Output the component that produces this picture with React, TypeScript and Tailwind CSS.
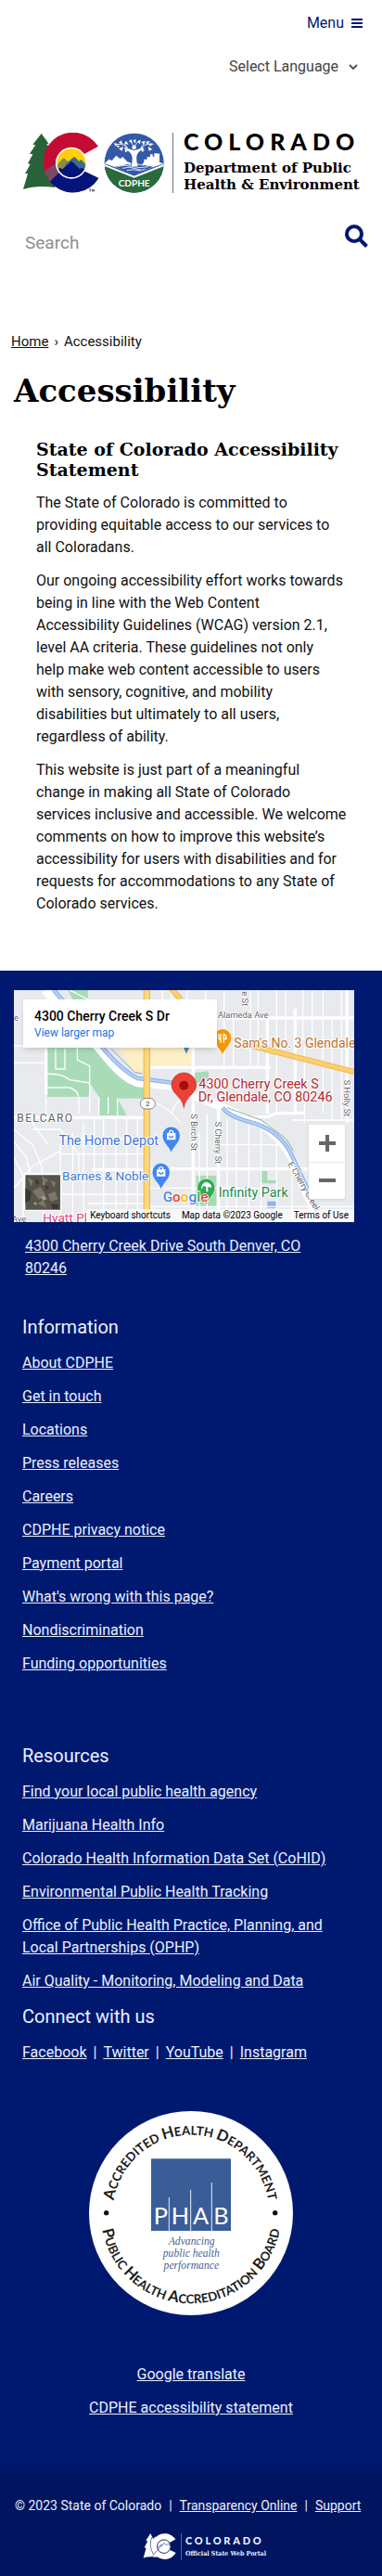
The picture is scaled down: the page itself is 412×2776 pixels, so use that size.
import type { ReactNode } from "react";

const informationLinks = [
  "About CDPHE",
  "Get in touch",
  "Locations",
  "Press releases",
  "Careers",
  "CDPHE privacy notice",
  "Payment portal",
  "What's wrong with this page?",
  "Nondiscrimination",
  "Funding opportunities",
];

const resourceLinks = [
  "Find your local public health agency",
  "Marijuana Health Info",
  "Colorado Health Information Data Set (CoHID)",
  "Environmental Public Health Tracking",
  "Office of Public Health Practice, Planning, and Local Partnerships (OPHP)",
  "Air Quality - Monitoring, Modeling and Data",
];

const socialLinks = ["Facebook", "Twitter", "YouTube", "Instagram"];

function BrandMarks() {
  return (
    <svg viewBox="72 430 462 195" className="h-[65px] w-[154px] shrink-0" aria-hidden="true">
      <defs>
        <clipPath id="c-shape">
          <path d="M318 474A97 97 0 1 0 319 577L268 552A47 47 0 1 1 266 503Z" />
        </clipPath>
        <clipPath id="sun">
          <circle cx="231" cy="528" r="46" />
        </clipPath>
        <clipPath id="seal">
          <circle cx="434" cy="528" r="96" />
        </clipPath>
      </defs>
      <path d="M134 433L106 468L115 470L96 498L106 500L90 530L98 532L81 563L90 562L75 613Q120 598 178 607L178 500L164 498L172 496L151 467L158 466Z" fill="#276239" />
      <g clipPath="url(#c-shape)">
        <path d="M120 420H340V640H120Z" fill="#c40c33" />
        <path d="M130 565L182 528L205 545L150 600Z" fill="#7a4a66" />
        <path d="M150 600L215 535L340 545V640H150Z" fill="#05147c" />
      </g>
      <circle cx="231" cy="528" r="51" fill="#fff" />
      <g clipPath="url(#sun)">
        <path d="M180 475H285V580H180Z" fill="#ffd100" />
        <path d="M175 545L206 510L222 526L242 508L256 522L262 517L290 545V590H175Z" fill="#8b8b45" />
        <path d="M214 528L240 508L256 523L263 517L290 548V590H190Z" fill="#3a6e8d" />
        <path d="M175 560L193 543L202 548L232 522L258 547L265 543L290 560V590H175Z" fill="#05147c" />
      </g>
      <path d="M288 613h7m-3.500 0v8m7 0v-8l3 5l3-5v8" fill="none" stroke="#222" strokeWidth="2" />

      <g clipPath="url(#seal)">
        <path d="M335 430H533V630H335Z" fill="#3359a8" />
        <path d="M335 536L434 575L533 536V630H335Z" fill="#2b6b3b" />
        <path d="M338 530L352 516L362 520L376 504L389 515L397 508L412 524L424 528L418 545L434 552L455 540L466 524V516H476V508H486V500H494V507H499V497H510V500L516 496V526L530 530L434 562Z" fill="#fff" />
        <path d="M335 534L434 573L533 534" fill="none" stroke="#fff" strokeWidth="6" />
        <path d="M372 540L434 564L496 540L452 533L434 541L414 532Z" fill="#3359a8" />
        <path d="M380 539Q405 532 428 539T480 540M396 545Q420 538 440 546T470 547M410 552Q430 546 456 553M425 533Q445 530 465 535" fill="none" stroke="#fff" strokeWidth="2.500" />
        <path d="M425 538Q431 515 426 503Q421 490 401 481L406 477Q423 485 434 487Q445 485 462 477L467 481Q447 490 443 503Q439 515 446 538Z" fill="#fff" />
        <circle cx="434" cy="477" r="7" fill="#fff" />
      </g>
      <g fill="#fff">
        <path d="M370 462l14 6l-12 5zM384 482l15-7l-4 14zM392 455l6 14l-14-7zM408 456l8 12l-14-2zM424 451l5 13l-12-6zM440 451l-2 14l-8-10zM455 453l-2 14l-9-9zM470 456l-4 13l-9-9zM485 456l-7 14l-7-10zM498 466l-15 8l2-10zM493 483l-14-8l3 14zM404 484l12 4l-11 6zM468 486l-12-3l5 10zM376 472l12 0l-6 7z" />
        <path d="M380 468Q400 464 412 480M490 468Q470 464 456 480M402 465L412 478M466 465L456 478M424 460L430 470M446 460L438 470" fill="none" stroke="#fff" strokeWidth="2.500" />
      </g>
      <text x="434" y="603" textAnchor="middle" fontSize="30" fontWeight="700" fill="#fff" className="font-['Lato']">
        CDPHE
      </text>
    </svg>
  );
}

function Poi({ x, y, fill, children }: { x: number; y: number; fill: string; children?: ReactNode }) {
  return (
    <g transform={`translate(${x} ${y})`}>
      <path d="M0 58C-5 36-29 25-29 0A29 29 0 0 1 29 0C29 25 5 36 0 58Z" fill={fill} stroke="#fff" strokeWidth="2" />
      {children}
    </g>
  );
}

function BagGlyph() {
  return (
    <g fill="none" stroke="#fff" strokeWidth="4">
      <path d="M-12-6H12V12H-12Z" fill="#fff" />
      <path d="M-6-6V-10A6 6 0 0 1 6-10V-6" />
      <path d="M-6 0A6 6 0 0 0 6 0" stroke="#4285f4" />
    </g>
  );
}

function MapDrawing() {
  return (
    <svg viewBox="0 0 1101 750" preserveAspectRatio="xMidYMid slice" className="block h-full w-full font-['Roboto']" role="img" aria-label="Map of 4300 Cherry Creek S Dr">
      <path d="M0 0H1101V750H0Z" fill="#e8eaed" />
      <path d="M175 0H240V30H190ZM104 180H270L330 250L430 320V350H335L365 405H275V345L245 300V345H104Z" fill="#aadbb8" />
      <path d="M330 180H580V240L390 265Z" fill="#fdf0c6" />
      <path d="M590 600H655V700H590ZM797 585H820V615H850V625H797ZM575 268L630 262V300H590Z" fill="#a8dab5" />
      <path d="M820 683H850V705H820Z" fill="#8ab4f8" />

      <g fill="none" stroke="#fff" strokeWidth="4">
        <path d="M104 180V410M135 190V255H165V190M205 180V225L245 245V400M104 270Q160 270 180 290L245 300M104 315H180Q210 325 210 350V400M275 345V405M305 345V400M335 350V405M0 180H104M0 235H100M180 0L240 30" />
        <path d="M150 500V740M190 460V740M225 430V740M260 415V600M290 415V740M330 415V740M365 415V740M400 415V740M150 480H420M150 530H420M150 660H420M240 690H420" />
        <path d="M0 450L60 500L90 570L95 740M0 490L40 540L60 620M0 540L30 600V750M60 450H150L210 530V600M0 640L60 570L150 520M60 430L110 500" />
        <path d="M480 0V30M510 0V30M560 0V30M620 0V30M680 0V260M710 90V250M765 0V250M790 0V250M850 0V400M880 0V170M935 0V160M965 0V180M1000 0V400M1030 90V420M1060 0V420" />
        <path d="M450 360Q500 380 540 430M510 400Q520 360 560 340M600 460V740M625 400V740M690 420V740M720 420V740M760 430V740M800 450V740M850 470V740M900 540V740" />
        <path d="M440 700H1101M440 640H800M660 500H860M900 420H1101M940 180V430" />
      </g>
      <g fill="none" stroke="#fff" strokeWidth="10">
        <path d="M0 412H420M440 250H830M820 90V400M690 90H1101M440 578H950M580 180V750M662 380V750M910 60V400M1078 0V430M104 190V340M770 410H820L850 398H940M250 580H420" />
      </g>
      <path d="M100 0L285 200Q350 285 400 300L510 310Q590 345 690 385L810 440Q900 505 935 630L990 750" fill="none" stroke="#fff" strokeWidth="26" />
      <path d="M130 0L290 190Q350 260 400 285L520 300M675 380Q700 410 760 425Q860 450 900 535T970 690" fill="none" stroke="#8fb5ee" strokeWidth="14" />
      <path d="M130 0L290 190Q350 260 400 285L520 300M675 380Q700 410 760 425Q860 450 900 535T970 690" fill="none" stroke="#b9d2f6" strokeWidth="6" />
      <path d="M315 190L390 265L415 270M690 380L800 420L880 480L905 520" fill="none" stroke="#86ad9e" strokeWidth="3" />
      <path d="M430 0V750" stroke="#f1b84c" strokeWidth="22" />
      <path d="M430 0V750" stroke="#fcd97e" strokeWidth="15" />
      <path d="M505-10L540 30M770 180L1101 264" stroke="#f1b84c" strokeWidth="18" />
      <path d="M505-10L540 30M770 180L1101 264" stroke="#fcd06c" strokeWidth="12" />
      <rect x="409" y="350" width="48" height="34" rx="17" fill="#fff" stroke="#555" strokeWidth="2" />
      <text x="433" y="376" fontSize="24" textAnchor="middle" fill="#444">2</text>

      <g fontSize="28" fill="#5f6368" stroke="#fff" strokeWidth="5" paintOrder="stroke" strokeLinejoin="round">
        <text x="660" y="89">Alameda Ave</text>
        <text x="0" y="98">e</text>
        <text x="-6" y="750">Ave</text>
        <text transform="translate(738 4) rotate(90)">e St</text>
        <text transform="translate(1067 290) rotate(90)">S Holly St</text>
        <text transform="translate(573 400) rotate(90)">S Birch St</text>
        <text transform="translate(651 425) rotate(90)">S Cherry St</text>
        <text transform="translate(886 562) rotate(60)">E Cherry Creek</text>
        <text x="10" y="425" fontSize="36" letterSpacing="4">BELCARO</text>
      </g>

      <path d="M549 186H567L558 206Z" fill="#5282c0" />
      <Poi x={675} y={154} fill="#f29900">
        <path d="M-12-12V0Q-12 6-6 6V16M-6-12V6M4 16V-12Q14-8 12 4H4" fill="none" stroke="#fff" strokeWidth="4" />
      </Poi>
      <Poi x={509} y={470} fill="#4285f4"><BagGlyph /></Poi>
      <Poi x={476} y={588} fill="#4285f4"><BagGlyph /></Poi>
      <Poi x={622} y={638} fill="#34a853">
        <path d="M-16 6Q-16-14 0-18Q18-14 18 0L6-2V14H0V-2L-8-6Z" fill="#fff" />
      </Poi>
      <path d="M550 380C546 345 510 335 510 307A40 40 0 0 1 590 307C590 335 554 345 550 380Z" fill="#ea4335" stroke="#c5221f" strokeWidth="2" />
      <circle cx="550" cy="308" r="15" fill="#a50e0e" />

      <g fontSize="41" stroke="#fff" strokeWidth="6" paintOrder="stroke" strokeLinejoin="round">
        <text x="712" y="185" fontSize="42" fill="#c2732c">Sam's No. 3 Glendale</text>
        <text x="598" y="317" fontSize="43" fill="#b3282d">4300 Cherry Creek S</text>
        <text x="596" y="359" fontSize="43" fill="#b3282d">Dr, Glendale, CO 80246</text>
        <text x="468" y="500" fontSize="43" textAnchor="end" fill="#3c78d8">The Home Depot</text>
        <text x="436" y="616" textAnchor="end" fill="#3c78d8">Barnes &amp; Noble</text>
        <text x="662" y="668" fontSize="43" fill="#25874a">Infinity Park</text>
        <text x="94" y="750" fill="#e0457b">Hyatt Pl</text>
      </g>
      <text x="482" y="684" fontSize="46" stroke="#fff" strokeWidth="5" paintOrder="stroke" fontWeight="500">
        <tspan fill="#4285f4">G</tspan>
        <tspan fill="#ea4335">o</tspan>
        <tspan fill="#fbbc04">o</tspan>
        <tspan fill="#4285f4">g</tspan>
        <tspan fill="#34a853">l</tspan>
        <tspan fill="#ea4335">e</tspan>
      </text>

      <path d="M32 592H154V714H32Z" fill="#fff" />
      <path d="M37 598H150V710H37Z" fill="#55534a" />
      <path d="M45 606l18 10l-8 20zM90 600l22 14l-18 16zM60 650l26-14l16 24l-20 18zM110 660l24-10l8 26l-22 8zM76 690l20-12l10 26zM116 616l20 4l-6 18z" fill="#7d7566" />
      <path d="M37 640l20 12l-6 30l-14 6zM100 632l12 4l-6 12zM120 690l24 4v14h-18zM70 610l12 10l-10 12z" fill="#37392f" />
      <path d="M92 622l8 4l-4 6zM86 668l14-4l6 12l-12 4zM62 690l8-6l6 12z" fill="#a39a89" />
    </svg>
  );
}

function LocationMap() {
  return (
    <div className="relative mr-[30px] ml-[15px] h-[250px] overflow-hidden font-['Roboto']">
      <MapDrawing />
      <div className="absolute top-[10px] left-[10px] h-[52px] w-[209px] bg-white px-3 pt-2 shadow-md">
        <p className="text-[14px] leading-5 font-medium text-black">4300 Cherry Creek S Dr</p>
        <a href="#map" className="block text-[12px] leading-4 text-[#1a73e8]">View larger map</a>
      </div>
      <div className="absolute right-[10px] bottom-[25px] flex h-20 w-[39px] flex-col divide-y divide-gray-200 rounded-xs bg-white shadow">
        <button type="button" aria-label="Zoom in" className="flex flex-1 items-center justify-center">
          <svg viewBox="0 0 18 18" className="h-[18px] w-[18px]" fill="#666"><path d="M7 0h4v7h7v4h-7v7H7v-7H0V7h7z" /></svg>
        </button>
        <button type="button" aria-label="Zoom out" className="flex flex-1 items-center justify-center">
          <svg viewBox="0 0 18 18" className="h-[18px] w-[18px]" fill="#666"><path d="M0 7h18v4H0z" /></svg>
        </button>
      </div>
      <div className="absolute right-0 bottom-0 flex h-[14px] items-center gap-3 bg-white/70 pr-[6px] pl-1 text-[10px] leading-none text-black">
        <button type="button">Keyboard shortcuts</button>
        <span>Map data ©2023 Google</span>
        <a href="#terms">Terms of Use</a>
      </div>
    </div>
  );
}

function AccreditationSeal() {
  return (
    <svg viewBox="288 105 660 660" className="h-[220px] w-[220px]" role="img" aria-label="Public Health Accreditation Board seal">
      <defs>
        <path id="ring-top" d="M365 435A253 253 0 0 1 871 435" />
        <path id="ring-bottom" d="M326 435A292 292 0 0 0 910 435" />
      </defs>
      <circle cx="618" cy="435" r="330" fill="#fff" />
      <g className="font-['Lato']" fontSize="40" fontWeight="700" fill="#1c1c1c" textAnchor="middle">
        <text>
          <textPath href="#ring-top" startOffset="50%">
            <tspan fontSize="50">A</tspan>CCREDITED <tspan fontSize="50">H</tspan>EALTH <tspan fontSize="50">D</tspan>EPARTMENT
          </textPath>
        </text>
        <text>
          <textPath href="#ring-bottom" startOffset="50%">
            <tspan fontSize="50">P</tspan>UBLIC <tspan fontSize="50">H</tspan>EALTH <tspan fontSize="50">A</tspan>CCREDITATION <tspan fontSize="50">B</tspan>OARD
          </textPath>
        </text>
      </g>
      <circle cx="344" cy="434" r="8" fill="#111" />
      <circle cx="890" cy="434" r="8" fill="#111" />
      <path d="M489 259H747V492H489Z" fill="#3a5d98" />
      <path d="M547 384V492M617 360V492M685 336V492" stroke="#e8eefa" strokeWidth="3" />
      <g className="font-['Lato']" fontSize="76" fill="#fff" textAnchor="middle">
        <text x="520" y="471">P</text>
        <text x="583" y="471">H</text>
        <text x="650" y="471">A</text>
        <text x="715" y="471">B</text>
      </g>
      <g className="font-['Liberation_Serif']" fontSize="35" fontStyle="italic" fill="#4a5f93" textAnchor="middle">
        <text x="620" y="538">Advancing</text>
        <text x="619" y="577">public health</text>
        <text x="619" y="616">performance</text>
      </g>
    </svg>
  );
}

function PortalMark() {
  return (
    <svg viewBox="455 655 115 95" className="h-[32px] w-[38px] shrink-0" aria-hidden="true">
      <path d="M483 660L468 684L474 685L463 707L469 708L460 740Q480 734 505 738L500 670L492 678Z" fill="#fff" />
      <path d="M565 680A42 42 0 1 0 566 724L544 713A20 20 0 1 1 543 692Z" fill="#fff" />
      <circle cx="527" cy="703" r="22" fill="#fff" stroke="#1c2d70" strokeWidth="3" />
      <path d="M488 735L527 692L535 699L541 694L548 702M507 707L518 697L523 702M488 672Q476 700 492 727" fill="none" stroke="#1c2d70" strokeWidth="2" />
    </svg>
  );
}

function LinkList({ links }: { links: string[] }) {
  return (
    <ul className="flex flex-col gap-3">
      {links.map((label) => (
        <li key={label}>
          <a href="#" className="underline">{label}</a>
        </li>
      ))}
    </ul>
  );
}

export default function App() {
  return (
    <div className="bg-white font-['Roboto',sans-serif] text-base leading-6 text-[#111]">
      <header className="pb-[82px]">
        <div className="flex justify-end pt-[13px] pr-[21px]">
          <button type="button" className="flex items-center gap-2 text-[#001970]">
            Menu
            <svg viewBox="0 0 12 10" className="h-[10px] w-3" fill="currentColor" aria-hidden="true">
              <path d="M0 0h12v2H0zM0 4h12v2H0zM0 8h12v2H0z" />
            </svg>
          </button>
        </div>
        <div className="mt-[23px] flex justify-end pr-[21px]">
          <div className="relative flex items-center text-[#444]">
            <select aria-label="Language" className="w-36 appearance-none bg-transparent">
              <option>Select Language</option>
            </select>
            <svg viewBox="0 0 10 6" className="pointer-events-none absolute right-[5px] h-[6px] w-[10px]" fill="none" stroke="#555" strokeWidth="2" aria-hidden="true">
              <path d="M1 1l4 4l4-4" />
            </svg>
          </div>
        </div>
        <a href="#home" className="mt-[59px] ml-6 flex h-[65px] items-stretch text-black">
          <BrandMarks />
          <span className="ml-2 w-px bg-gray-500" />
          <span className="ml-[11px] flex flex-col justify-between">
            <span className="font-['Lato'] text-[25px] leading-[18px] font-black tracking-[0.24em]">COLORADO</span>
            <span className="font-['DejaVu_Serif',serif] text-[15px] leading-[18px] font-bold whitespace-nowrap">
              Department of Public
              <br />
              Health &amp; Environment
            </span>
          </span>
        </a>
        <form className="mt-[34px] flex h-7 items-start justify-between pr-[15px] pl-[27px]">
          <input type="search" aria-label="Search" placeholder="Search" className="mt-2 w-64 bg-transparent text-[19px] leading-6 placeholder:text-[#8e8e8e]" />
          <button type="button" aria-label="Submit search">
            <svg viewBox="0 0 25 25" className="h-[25px] w-[25px]" fill="none" stroke="#001970" strokeWidth="4" aria-hidden="true">
              <circle cx="10" cy="10" r="8" />
              <path d="M16 16l7.500 7.500" />
            </svg>
          </button>
        </form>
      </header>

      <main>
        <nav aria-label="Breadcrumb" className="mt-1 flex gap-[6px] pl-3 text-[15px]">
          <a href="#home" className="underline">Home</a>
          <span>›</span>
          <span>Accessibility</span>
        </nav>
        <h1 className="mt-[21px] pl-[15px] font-['DejaVu_Serif',serif] text-[34px] leading-10 font-bold text-black">Accessibility</h1>
        <section className="mt-8 pr-[38px] pb-[60px] pl-[39px]">
          <h2 className="font-['DejaVu_Serif',serif] text-[19px] leading-[22px] font-bold text-black">State of Colorado Accessibility Statement</h2>
          <div className="mt-[13px] flex flex-col gap-3">
            <p>The State of Colorado is committed to providing equitable access to our services to all Coloradans.</p>
            <p>
              Our ongoing accessibility effort works towards being in line with the Web Content
              <br />
              Accessibility Guidelines (WCAG) version 2.1, level AA criteria. These guidelines not only
              <br />
              help make web content accessible to users
              <br />
              with sensory, cognitive, and mobility
              <br />
              disabilities but ultimately to all users, regardless of ability.
            </p>
            <p>
              This website is just part of a meaningful change in making all State of Colorado services inclusive and
              accessible. We welcome comments on how to improve this website’s accessibility for users with disabilities
              and for requests for accommodations to any State of Colorado services.
            </p>
          </div>
        </section>
      </main>

      <footer className="bg-[#001970] pt-[21px] text-[#eaf1ff]">
        <LocationMap />
        <p className="mt-[14px] pr-[76px] pl-[27px]">
          <a href="#map" className="underline">4300 Cherry Creek Drive South Denver, CO 80246</a>
        </p>
        <div className="pr-[44px] pl-6">
          <h3 className="mt-[39px] mb-[15px] text-[20px]">Information</h3>
          <LinkList links={informationLinks} />
          <h3 className="mt-[75px] mb-[15px] text-[20px]">Resources</h3>
          <LinkList links={resourceLinks} />
          <h3 className="mt-[14px] mb-[15px] text-[20px]">Connect with us</h3>
          <ul className="flex">
            {socialLinks.map((label, index) => (
              <li key={label}>
                {index > 0 && <span className="px-[7px]">|</span>}
                <a href="#" className="underline">{label}</a>
              </li>
            ))}
          </ul>
        </div>
        <div className="mt-[51px] flex justify-center">
          <AccreditationSeal />
        </div>
        <div className="mt-[52px] flex flex-col items-center gap-3">
          <a href="#translate" className="underline">Google translate</a>
          <a href="#accessibility" className="underline">CDPHE accessibility statement</a>
        </div>
        <div className="mt-10 h-6 bg-linear-to-b from-[#001970] to-[#001460]" />
        <div className="bg-[#001460] pt-[17px] pb-[16px]">
          <p className="flex gap-2 pl-4 text-[14px]">
            <span>© 2023 State of Colorado</span>
            <span>|</span>
            <a href="#transparency" className="underline">Transparency Online</a>
            <span>|</span>
            <a href="#support" className="underline">Support</a>
          </p>
          <a href="#colorado" className="mt-[16px] flex items-center justify-center pl-7">
            <PortalMark />
            <span className="mx-[4px] h-[29px] w-px bg-[#53629c]" />
            <span className="flex flex-col gap-1">
              <span className="font-['Lato'] text-[11px] leading-[10px] font-black tracking-[0.25em]">COLORADO</span>
              <span className="font-['DejaVu_Serif_Condensed','DejaVu_Serif',serif] text-[7px] leading-[9px] font-bold">Official State Web Portal</span>
            </span>
          </a>
        </div>
      </footer>
    </div>
  );
}
